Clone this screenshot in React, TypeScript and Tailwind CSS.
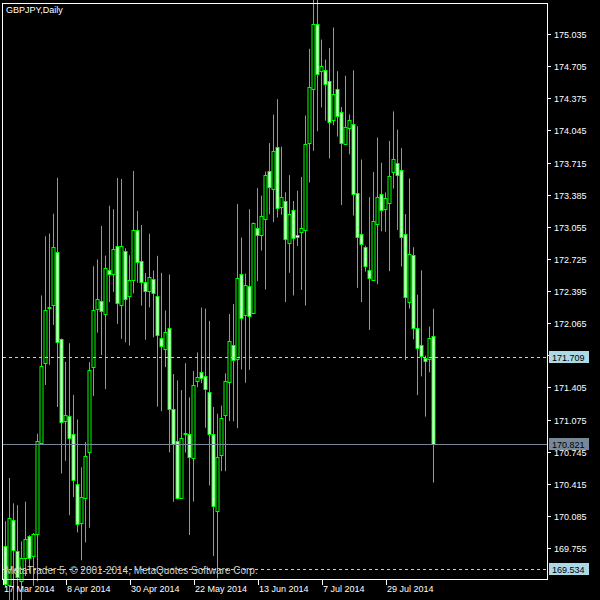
import React from "react";

// chart geometry
const TOP = 34;
const PX_PER_UNIT = 97.35;
const yOf = (p: number) => TOP + (175.035 - p) * PX_PER_UNIT;
const pOf = (y: number) => 175.035 - (y - TOP) / PX_PER_UNIT;

// rough path of closes, [x, y] in screen pixels
const shape: [number, number][] = [
  [5, 545], [20, 550], [33, 540], [40, 420], [47, 290], [52, 270], [60, 400], [66, 460],
  [72, 470], [80, 500], [88, 380], [96, 330], [105, 300], [112, 280], [125, 260], [135, 270],
  [145, 290], [155, 320], [165, 350], [175, 460], [185, 460], [192, 410], [200, 370],
  [208, 410], [215, 505], [225, 400], [235, 320], [245, 300], [258, 230], [270, 175],
  [285, 210], [298, 270], [306, 140], [314, 25], [320, 60], [326, 130], [336, 100],
  [346, 120], [356, 230], [370, 240], [385, 230], [395, 170], [402, 270], [410, 290],
  [415, 360], [422, 380], [428, 350], [432, 430], [436, 440],
];

const interp = (x: number) => {
  for (let i = 0; i < shape.length - 1; i++) {
    const [x0, y0] = shape[i];
    const [x1, y1] = shape[i + 1];
    if (x >= x0 && x <= x1) return y0 + ((y1 - y0) * (x - x0)) / (x1 - x0);
  }
  return shape[shape.length - 1][1];
};

let seed = 11;
const rnd = () => {
  seed = (seed * 16807) % 2147483647;
  return seed / 2147483647;
};

interface Bar { x: number; o: number; h: number; l: number; c: number }

const bars: Bar[] = [];
let prev = pOf(interp(5));
for (let i = 0; i < 108; i++) {
  const x = 5 + i * 4;
  const c = i === 107 ? 170.821 : pOf(interp(x)) + (rnd() - 0.5) * 0.8;
  const o = prev + (rnd() - 0.5) * 0.1;
  const h = Math.max(o, c) + rnd() * 0.8;
  const l = Math.min(o, c) - rnd() * 0.8;
  bars.push({ x, o, h, l, c });
  prev = c;
}

const priceTicks = Array.from({ length: 17 }, (_, k) => 175.035 - k * 0.33);
const dates: [string, number][] = [
  ["17 Mar 2014", 3], ["8 Apr 2014", 66], ["30 Apr 2014", 130], ["22 May 2014", 194],
  ["13 Jun 2014", 258], ["7 Jul 2014", 322], ["29 Jul 2014", 386],
];

const App: React.FC = () => {
  return (
    <div className="w-[600px] h-[600px] bg-black overflow-hidden">
      <svg width={600} height={600} className="block" style={{ fontFamily: "'Liberation Sans', Arial, sans-serif" }}>
        {/* candles */}
        {bars.map((b, i) => {
          const top = Math.round(yOf(Math.max(b.o, b.c))) + 0.5;
          const bot = Math.round(yOf(Math.min(b.o, b.c))) + 0.5;
          return (
            <g key={i}>
              <line x1={b.x + 0.5} x2={b.x + 0.5} y1={yOf(b.h)} y2={yOf(b.l)} stroke="#00ff00" />
              <rect
                x={b.x - 1}
                y={top}
                width={3}
                height={Math.max(1, bot - top)}
                fill={b.c > b.o ? "#000000" : "#ffffff"}
                stroke="#00ff00"
                strokeWidth={1}
              />
            </g>
          );
        })}

        {/* level lines */}
        <line x1={3} x2={547} y1={357.5} y2={357.5} stroke="#add8e6" strokeDasharray="3 3" />
        <line x1={3} x2={547} y1={444.5} y2={444.5} stroke="#778899" />
        <line x1={3} x2={547} y1={569.5} y2={569.5} stroke="#add8e6" strokeDasharray="3 3" />

        {/* frame */}
        <rect x={2.5} y={3.5} width={545} height={576} fill="none" stroke="#ffffff" />

        <text x={6} y={13} fill="#ffffff" fontSize={9}>GBPJPY,Daily</text>
        <text x={5} y={574} fill="#d0d0d0" fontSize={10}>
          MetaTrader 5, © 2001-2014, MetaQuotes Software Corp.
        </text>

        {/* price scale */}
        {priceTicks.map((p) => {
          const y = Math.round(yOf(p)) + 0.5;
          return (
            <g key={p}>
              <line x1={547} x2={551} y1={y} y2={y} stroke="#ffffff" />
              <text x={554} y={y + 3.5} fill="#ffffff" fontSize={9}>{p.toFixed(3)}</text>
            </g>
          );
        })}
        <rect x={549} y={351} width={40} height={12} fill="#add8e6" />
        <text x={552} y={360.5} fill="#000000" fontSize={9}>171.709</text>
        <rect x={549} y={438} width={40} height={12} fill="#778899" />
        <text x={552} y={447.5} fill="#000000" fontSize={9}>170.821</text>
        <rect x={549} y={563} width={40} height={12} fill="#add8e6" />
        <text x={552} y={572.5} fill="#000000" fontSize={9}>169.534</text>

        {/* time scale */}
        {dates.map(([d, x]) => (
          <g key={d}>
            <line x1={x + 0.5} x2={x + 0.5} y1={580} y2={585} stroke="#ffffff" />
            <text x={x + 1} y={592} fill="#ffffff" fontSize={9}>{d}</text>
          </g>
        ))}
      </svg>
    </div>
  );
};

export default App;
